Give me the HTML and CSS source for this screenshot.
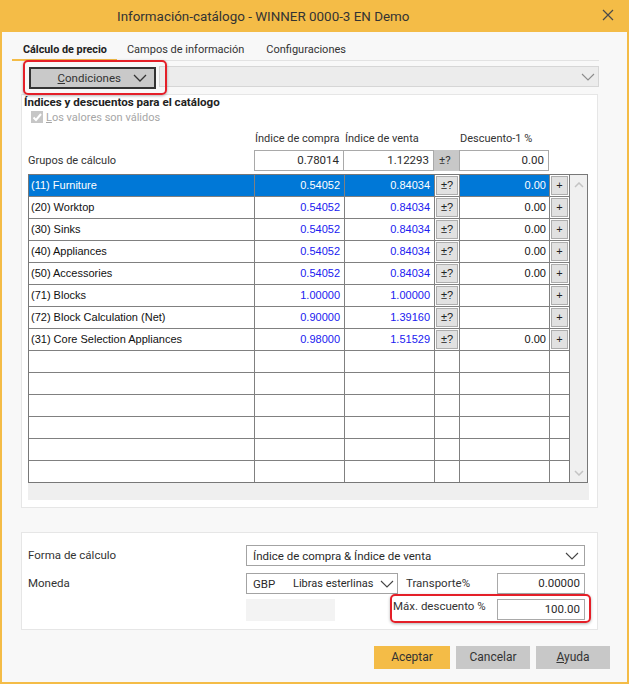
FILE: index.html
```html
<!DOCTYPE html>
<html lang="es">
<head>
<meta charset="utf-8">
<title>Información-catálogo</title>
<link rel="stylesheet" href="styles.css">
</head>
<body>
<div class="window">
  <div class="titlebar">
    <span class="title">Información-catálogo - WINNER 0000-3 EN Demo</span>
    <svg class="close" width="12" height="12" viewBox="0 0 12 12"><path d="M1 1 L11 11 M11 1 L1 11" stroke="#4a4a4a" stroke-width="1.2" fill="none"/></svg>
  </div>
  <div class="body">
    <div class="tabs">
      <div class="tab active">Cálculo de precio</div>
      <div class="tab">Campos de información</div>
      <div class="tab">Configuraciones</div>
    </div>

    <div class="cond-row">
      <div class="cond-btn">
        <span><u>C</u>ondiciones</span>
        <svg width="14" height="8" viewBox="0 0 14 8"><polyline points="1,1 7,7 13,1" fill="none" stroke="#333" stroke-width="1.3"/></svg>
      </div>
      <div class="combo">
        <svg width="14" height="8" viewBox="0 0 14 8"><polyline points="1,1 7,7 13,1" fill="none" stroke="#8c8c8c" stroke-width="1.1"/></svg>
      </div>
    </div>

    <div class="panel calc">
      <div class="heading">Índices y descuentos para el catálogo</div>
      <div class="check">
        <span class="box"><svg width="12" height="12" viewBox="0 0 12 12"><polyline points="2.5,6.5 5,9 10,3" fill="none" stroke="#fff" stroke-width="2"/></svg></span>
        <span><u>L</u>os valores son válidos</span>
      </div>

      <div class="cols heads">
        <span></span>
        <span class="h">Índice de compra</span>
        <span class="h">Índice de venta</span>
        <span></span>
        <span class="h">Descuento-1 %</span>
      </div>

      <div class="cols group-row">
        <span class="lbl">Grupos de cálculo</span>
        <span class="field">0.78014</span>
        <span class="field">1.12293</span>
        <span class="pm-grey">±?</span>
        <span class="field">0.00</span>
      </div>

      <div class="grid-wrap">
        <div class="grid">
          <div class="c name sel">(11) Furniture</div><div class="c num sel">0.54052</div><div class="c num sel">0.84034</div><div class="c btn"><span class="mini">±?</span></div><div class="c dis sel">0.00</div><div class="c btn"><span class="mini">+</span></div>
          <div class="c name">(20) Worktop</div><div class="c num">0.54052</div><div class="c num">0.84034</div><div class="c btn"><span class="mini">±?</span></div><div class="c dis">0.00</div><div class="c btn"><span class="mini">+</span></div>
          <div class="c name">(30) Sinks</div><div class="c num">0.54052</div><div class="c num">0.84034</div><div class="c btn"><span class="mini">±?</span></div><div class="c dis">0.00</div><div class="c btn"><span class="mini">+</span></div>
          <div class="c name">(40) Appliances</div><div class="c num">0.54052</div><div class="c num">0.84034</div><div class="c btn"><span class="mini">±?</span></div><div class="c dis">0.00</div><div class="c btn"><span class="mini">+</span></div>
          <div class="c name">(50) Accessories</div><div class="c num">0.54052</div><div class="c num">0.84034</div><div class="c btn"><span class="mini">±?</span></div><div class="c dis">0.00</div><div class="c btn"><span class="mini">+</span></div>
          <div class="c name">(71) Blocks</div><div class="c num">1.00000</div><div class="c num">1.00000</div><div class="c btn"><span class="mini">±?</span></div><div class="c dis"></div><div class="c btn"><span class="mini">+</span></div>
          <div class="c name">(72) Block Calculation (Net)</div><div class="c num">0.90000</div><div class="c num">1.39160</div><div class="c btn"><span class="mini">±?</span></div><div class="c dis"></div><div class="c btn"><span class="mini">+</span></div>
          <div class="c name">(31) Core Selection Appliances</div><div class="c num">0.98000</div><div class="c num">1.51529</div><div class="c btn"><span class="mini">±?</span></div><div class="c dis">0.00</div><div class="c btn"><span class="mini">+</span></div>
          <div class="c"></div><div class="c"></div><div class="c"></div><div class="c"></div><div class="c"></div><div class="c"></div>
          <div class="c"></div><div class="c"></div><div class="c"></div><div class="c"></div><div class="c"></div><div class="c"></div>
          <div class="c"></div><div class="c"></div><div class="c"></div><div class="c"></div><div class="c"></div><div class="c"></div>
          <div class="c"></div><div class="c"></div><div class="c"></div><div class="c"></div><div class="c"></div><div class="c"></div>
          <div class="c"></div><div class="c"></div><div class="c"></div><div class="c"></div><div class="c"></div><div class="c"></div>
          <div class="c"></div><div class="c"></div><div class="c"></div><div class="c"></div><div class="c"></div><div class="c"></div>
        </div>
        <div class="scroll">
          <svg width="10" height="6" viewBox="0 0 10 6"><polyline points="1,5 5,1 9,5" fill="none" stroke="#c4c4c4" stroke-width="1.5"/></svg>
          <svg width="10" height="6" viewBox="0 0 10 6"><polyline points="1,1 5,5 9,1" fill="none" stroke="#c4c4c4" stroke-width="1.5"/></svg>
        </div>
      </div>
      <div class="band"></div>
    </div>

    <div class="panel form">
      <span class="flbl">Forma de cálculo</span>
      <div class="select wide">
        <span>Índice de compra &amp; Índice de venta</span>
        <svg width="14" height="8" viewBox="0 0 14 8"><polyline points="1,1 7,7 13,1" fill="none" stroke="#444" stroke-width="1.1"/></svg>
      </div>

      <span class="flbl">Moneda</span>
      <div class="select cur">
        <span class="code">GBP</span><span class="curname">Libras esterlinas</span>
        <svg width="14" height="8" viewBox="0 0 14 8"><polyline points="1,1 7,7 13,1" fill="none" stroke="#444" stroke-width="1.1"/></svg>
      </div>
      <span class="flbl trans">Transporte%</span>
      <span class="field">0.00000</span>

      <span class="r3"></span>
      <span class="blank r3"></span>
      <span class="flbl maxl r3">Máx. descuento %</span>
      <span class="field r3">100.00</span>
    </div>

    <div class="actions">
      <div class="abtn ok">Aceptar</div>
      <div class="abtn">Cancelar</div>
      <div class="abtn"><u>A</u>yuda</div>
    </div>
  </div>

  <div class="mark mark-cond"></div>
  <div class="mark mark-max"></div>
</div>
</body>
</html>
```

FILE: styles.css
```css
* { box-sizing: border-box; }

html, body {
  margin: 0;
  padding: 0;
  background: #f8f8f8;
}

body {
  font-family: "Roboto", "Noto Sans", "Liberation Sans", sans-serif;
  font-size: 11px;
  color: #2a2a2a;
}

.window {
  position: relative;
  width: 629px;
  height: 684px;
  border: 2px solid #f4bc47;
  border-top: none;
  background: #f8f8f8;
}

.titlebar {
  height: 32px;
  margin: 0 -2px;
  background: #f4bc47;
  display: flex;
  align-items: center;
  padding-left: 117px;
  position: relative;
}

.title {
  font-size: 13.4px;
  color: #333;
}

.close {
  position: absolute;
  right: 15px;
  top: 9px;
}

.body {
  padding: 0 28px 0 10px;
}

/* tabs */
.tabs {
  display: flex;
  margin-top: 8px;
  border-bottom: 1px solid #e2e2e2;
  height: 21px;
}

.tab {
  padding: 0 10px 0 10px;
  height: 21px;
  line-height: 19px;
  color: #333;
  font-size: 11px;
}

.tab.active {
  font-weight: bold;
  font-size: 10.8px;
  color: #222;
  padding: 0 10px 0 11px;
  border-bottom: 2px solid #f4bc47;
}

.tab:last-child { padding-left: 12px; }

/* condiciones row */
.cond-row {
  display: flex;
  margin-top: 6px;
  height: 21px;
  gap: 3px;
}

.cond-btn {
  margin-left: 17px;
  width: 127px;
  height: 22px;
  border: 2px solid #333;
  background: #c9c9c9;
  display: flex;
  align-items: center;
  justify-content: flex-end;
  gap: 12px;
  padding-right: 7px;
  color: #333;
  font-size: 11.5px;
}

.combo {
  flex: 1;
  height: 21px;
  margin-top: -1px;
  background: #ececec;
  border: 1px solid #d6d6d6;
  display: flex;
  align-items: center;
  justify-content: flex-end;
  padding-right: 3px;
}

/* panels */
.panel {
  background: #fff;
  border: 1px solid #e6e6e6;
  margin-left: 9px;
  margin-right: 1px;
}

.calc {
  margin-top: 6px;
  padding: 0 0 7px 6px;
}

.heading {
  font-weight: bold;
  font-size: 11.6px;
  color: #222;
  height: 15px;
  line-height: 15px;
  margin-left: -4px;
}

.check {
  display: flex;
  align-items: center;
  gap: 3px;
  height: 14px;
  margin-left: 3px;
  color: #a6a6a6;
}

.check .box {
  width: 12px;
  height: 12px;
  background: #c6c6c6;
  display: block;
}

.check .box svg { display: block; }

.cols {
  display: grid;
  grid-template-columns: 226px 90px 90px 25px 90px;
}

.heads {
  margin-top: 8px;
  height: 14px;
  line-height: 14px;
  white-space: nowrap;
}

.heads .h { padding-left: 1px; color: #333; }

.group-row {
  margin-top: 4px;
  height: 21px;
}

.group-row .lbl {
  line-height: 21px;
  color: #333;
}

.field {
  border: 1px solid #a9a9a9;
  background: #fff;
  text-align: right;
  padding-right: 4px;
  line-height: 19px;
  height: 21px;
  color: #2a2a2a;
  font-size: 11.5px;
}

.group-row .field:nth-child(3) { margin-left: -1px; }

.pm-grey {
  background: #c8c8c8;
  line-height: 21px;
  padding-left: 5px;
  color: #333;
  font-size: 11.5px;
}

/* table */
.grid-wrap {
  margin-top: 3px;
  width: 560px;
  border: 1px solid #787878;
  display: flex;
}

.grid {
  display: grid;
  grid-template-columns: 225px 89px 89px 24px 89px 19px;
  grid-auto-rows: 21px;
  gap: 1px;
  background: #808080;
  border-right: 1px solid #787878;
  font-family: "Liberation Sans", Arial, sans-serif;
  font-size: 11px;
}

.c {
  background: #fff;
  line-height: 21px;
  white-space: nowrap;
  overflow: hidden;
  color: #111;
}

.c.name { padding-left: 2px; }
.c.num { text-align: right; padding-right: 4px; color: #2020f0; }
.c.dis { text-align: right; padding-right: 3px; color: #111; }
.c.sel { background: #0078d7; color: #fff; }

.c.btn {
  padding: 1px 1px 0 1px;
}

.mini {
  display: block;
  height: 19px;
  background: #e1e1e1;
  border: 1px solid #adadad;
  text-align: center;
  line-height: 17px;
  color: #222;
  font-size: 11px;
}

.scroll {
  flex: 1;
  background: #f0f0f0;
  display: flex;
  flex-direction: column;
  justify-content: space-between;
  align-items: center;
  padding: 7px 0 6px;
}

.band {
  height: 17px;
  width: 561px;
  background: #efefef;
}

/* form panel */
.form {
  margin-top: 24px;
  padding: 12px 13px 7px 6px;
  display: grid;
  grid-template-columns: 218px 152px 99px 88px;
  grid-template-rows: 21px 21px 21px;
  row-gap: 7px;
  font-size: 11.5px;
}

.form .r3 { margin-top: -2px; }

.form .flbl {
  line-height: 21px;
  color: #333;
}

.select {
  border: 1px solid #a3a3a3;
  background: #fff;
  display: flex;
  align-items: center;
  padding: 0 6px 0 6px;
  color: #2a2a2a;
  white-space: nowrap;
}

.select.wide {
  grid-column: 2 / 5;
  justify-content: space-between;
  padding-right: 5px;
}

.select.cur .code { width: 40px; }
.select.cur .curname { flex: 1; font-size: 11px; }
.select.cur { padding-right: 3px; }

.trans { padding-left: 8px; }

.blank {
  background: #f3f3f3;
  width: 89px;
  height: 22px;
}

.flbl.maxl {
  margin-left: -5px;
  line-height: 14px;
}

/* actions */
.actions {
  display: flex;
  justify-content: flex-end;
  gap: 6px;
  margin-top: 16px;
  margin-right: -11px;
  font-size: 12px;
}

.abtn {
  width: 74px;
  height: 23px;
  background: #c8c8c8;
  text-align: center;
  line-height: 23px;
  color: #333;
}

.abtn.ok {
  width: 76px;
  background: #f4bc47;
}

/* red annotation marks */
.mark {
  position: absolute;
  border: 2px solid #e41f28;
  border-radius: 5px;
  box-shadow: 0 1px 3px rgba(0,0,0,0.3);
}

.mark-cond {
  left: 21px;
  top: 60px;
  width: 144px;
  height: 35px;
}

.mark-max {
  left: 388px;
  top: 594px;
  width: 201px;
  height: 29px;
}
```
